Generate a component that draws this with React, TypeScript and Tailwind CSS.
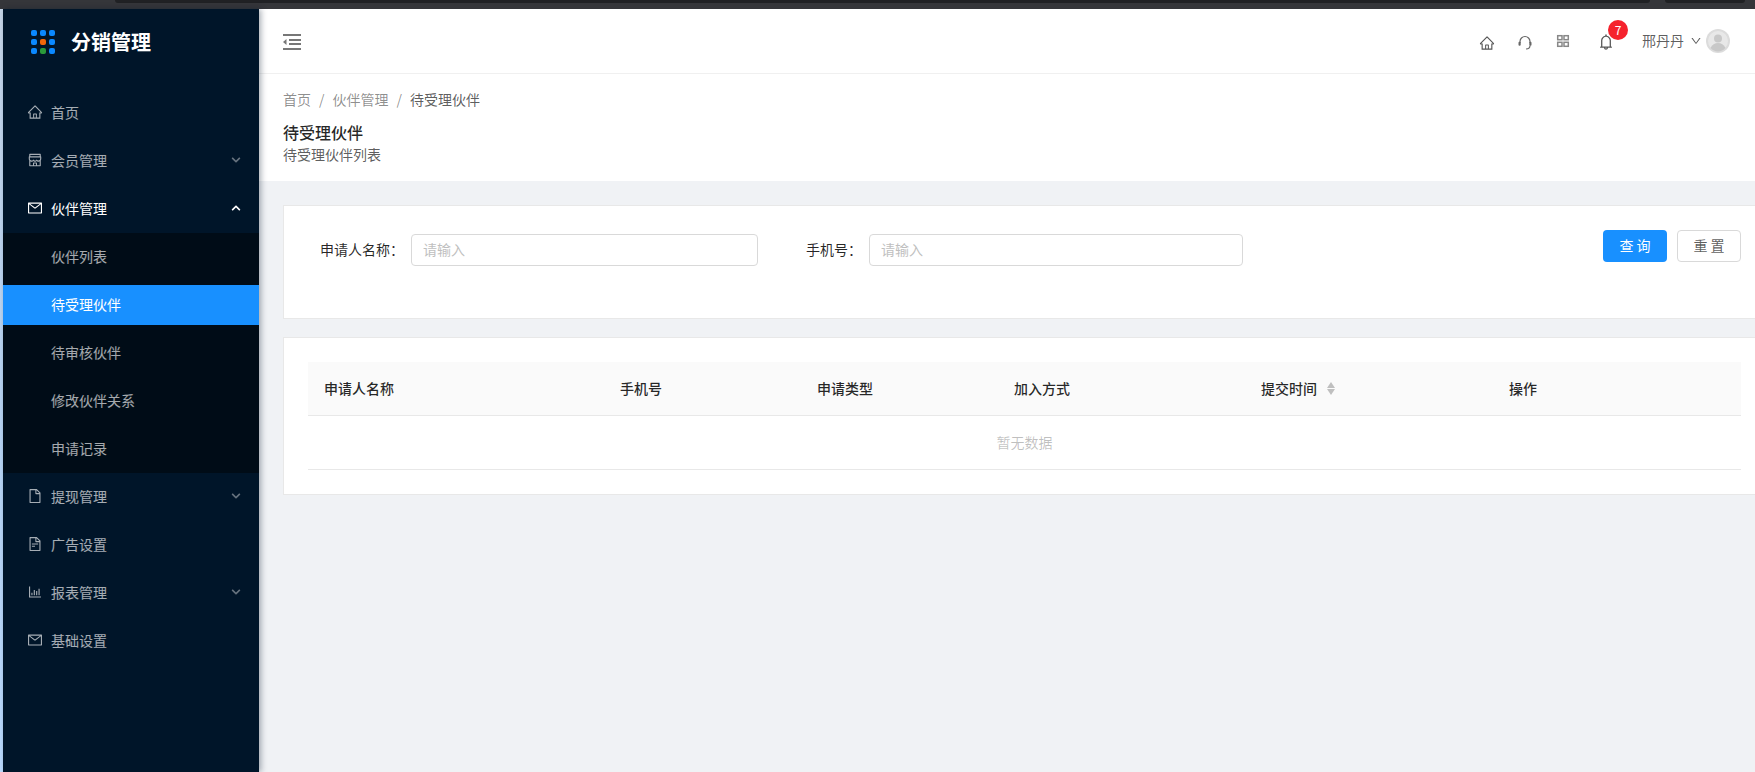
import type { ReactNode } from 'react';
import {
  AiOutlineHome,
  AiOutlineShop,
  AiOutlineMail,
  AiOutlineFile,
  AiOutlineFileText,
  AiOutlineBarChart,
  AiOutlineBell,
  AiOutlineDown,
} from 'react-icons/ai';
import { FaChevronDown, FaChevronUp } from 'react-icons/fa';

const dots = [
  'bg-[#0a88ff]', 'bg-[#0a88ff]', 'bg-[#0a88ff]',
  'bg-[#0a88ff]', 'bg-[#f0660a]', 'bg-[#0a88ff]',
  'bg-[#0a88ff]', 'bg-[#2b9a3a]', 'bg-[#0a88ff]',
];

function MenuItem({ icon, label, arrow, active }: { icon: ReactNode; label: string; arrow?: 'up' | 'down'; active?: boolean }) {
  return (
    <div className={`flex h-10 items-center pb-[2px] pl-6 pr-[18px] ${active ? 'text-white' : 'text-white/65'}`}>
      <span className="mr-2 flex w-4 justify-center text-[16px]">{icon}</span>
      <span className="flex-1">{label}</span>
      {arrow === 'down' && <FaChevronDown className="text-[10px] text-white/40" />}
      {arrow === 'up' && <FaChevronUp className="text-[10px] text-white" />}
    </div>
  );
}

function SubItem({ label, active }: { label: string; active?: boolean }) {
  return (
    <div className={`flex h-10 items-center pb-[2px] pl-12 ${active ? 'bg-[#1890ff] text-white' : 'text-white/65'}`}>{label}</div>
  );
}

function Sidebar() {
  return (
    <aside className="relative z-10 flex w-[256px] shrink-0 flex-col bg-[#001529] shadow-[2px_0_6px_rgba(0,21,41,0.35)]">
      <div className="flex h-[66px] items-center pl-7">
        <div className="grid w-6 grid-cols-3 gap-[3px]">
          {dots.map((c, i) => (
            <div key={i} className={`h-[6px] w-[6px] rounded-[2px] ${c}`} />
          ))}
        </div>
        <span className="ml-[16px] text-xl font-bold text-white">分销管理</span>
      </div>
      <div className="mt-[18px] flex flex-col gap-2">
        <MenuItem icon={<AiOutlineHome />} label="首页" />
        <MenuItem icon={<AiOutlineShop />} label="会员管理" arrow="down" />
        <MenuItem icon={<AiOutlineMail />} label="伙伴管理" arrow="up" active />
      </div>
      <div className="mt-1 flex flex-col gap-2 bg-[#000c17] py-1">
        <SubItem label="伙伴列表" />
        <SubItem label="待受理伙伴" active />
        <SubItem label="待审核伙伴" />
        <SubItem label="修改伙伴关系" />
        <SubItem label="申请记录" />
      </div>
      <div className="mt-1 flex flex-col gap-2">
        <MenuItem icon={<AiOutlineFile />} label="提现管理" arrow="down" />
        <MenuItem icon={<AiOutlineFileText />} label="广告设置" />
        <MenuItem icon={<AiOutlineBarChart />} label="报表管理" arrow="down" />
        <MenuItem icon={<AiOutlineMail />} label="基础设置" />
      </div>
    </aside>
  );
}

function Header() {
  return (
    <header className="flex h-[65px] shrink-0 items-center border-b border-[#f0f0f0] bg-white pl-6 pr-[25px] text-black/65">
      <svg className="mt-[2px] h-4 w-[18px]" viewBox="0 0 18 16" fill="#777">
        <rect x="0" y="0" width="18" height="2" />
        <rect x="0" y="14" width="18" height="2" />
        <rect x="6" y="5" width="12" height="2" />
        <rect x="6" y="9" width="12" height="2" />
        <path d="M3.500 5v6L0 8z" />
      </svg>
      <div className="ml-auto flex items-center text-base">
        <AiOutlineHome className="mt-[4px] text-[16px] text-[#555]" />
        <svg className="ml-[22px] mt-[4px] h-4 w-4" viewBox="0 0 16 16" fill="none" stroke="#666" strokeWidth="1.2">
          <path d="M3 8V6.500a5 5 0 0 1 10 0V8" />
          <rect x="1.500" y="6.800" width="2.200" height="4" rx="1" fill="#666" stroke="none" />
          <rect x="12.300" y="6.800" width="2.200" height="4" rx="1" fill="#666" stroke="none" />
          <path d="M13 10.500c0 2-1.500 3.500-4 3.500" />
        </svg>
        <svg className="ml-[22px] h-4 w-4" viewBox="0 0 16 16" fill="none" stroke="#888" strokeWidth="1.500">
          <rect x="2.700" y="2.700" width="4.300" height="4" />
          <rect x="9" y="2.700" width="4.300" height="4" />
          <rect x="2.700" y="9.300" width="4.300" height="4" />
          <rect x="9" y="9.300" width="4.300" height="4" />
        </svg>
        <div className="relative ml-[26px] mt-[2px]">
          <AiOutlineBell className="text-[18px] text-[#555]" />
          <span className="absolute -right-[13px] -top-[13px] flex h-5 w-5 items-center justify-center rounded-full bg-[#f5222d] text-xs text-white">7</span>
        </div>
        <span className="ml-[27px] pb-[2px] text-sm">邢丹丹</span>
        <AiOutlineDown className="ml-[6px] text-[12px]" />
        <svg className="ml-[4px] h-6 w-6" viewBox="0 0 24 24">
          <circle cx="12" cy="12" r="12" fill="#dcdcdc" />
          <circle cx="12" cy="12" r="10" fill="#e8e8e8" />
          <circle cx="12" cy="9.500" r="4" fill="#c8c8c8" />
          <path d="M4.500 19c1.500-3.500 4.500-5 7.500-5s6 1.500 7.500 5a10 10 0 0 1-15 0z" fill="#c8c8c8" />
        </svg>
      </div>
    </header>
  );
}

function PageHeader() {
  return (
    <div className="h-[107px] shrink-0 bg-white pl-6 pt-[14px] text-sm">
      <div className="flex h-[22px] items-center text-black/45">
        <span>首页</span>
        <span className="mx-2">/</span>
        <span>伙伴管理</span>
        <span className="mx-2">/</span>
        <span className="text-black/65">待受理伙伴</span>
      </div>
      <div className="mt-[10px] h-6 text-base leading-6 font-medium text-black/85">待受理伙伴</div>
      <div className="h-[22px] leading-[20px] text-black/65">待受理伙伴列表</div>
    </div>
  );
}

function Field({ label, labelWidth, inputWidth }: { label: string; labelWidth: string; inputWidth: string }) {
  return (
    <div className="flex items-center">
      <label className={`pb-[2px] text-black/85 ${labelWidth}`}>{label}</label>
      <input
        placeholder="请输入"
        className={`h-8 rounded border border-[#d9d9d9] bg-white px-[11px] pb-[2px] text-sm outline-none placeholder:text-[#bfbfbf] ${inputWidth}`}
      />
    </div>
  );
}

function SearchCard() {
  return (
    <div className="flex h-[114px] items-start border-y border-l border-[#e8e8e8] bg-white pl-[37px] pr-[14px] pt-[28px] text-sm">
      <Field label="申请人名称：" labelWidth="w-[90px] -ml-px" inputWidth="w-[347px] ml-px" />
      <div className="ml-12">
        <Field label="手机号：" labelWidth="w-[63px]" inputWidth="w-[374px]" />
      </div>
      <div className="-mt-1 ml-auto flex gap-[10px]">
        <button className="h-8 w-16 rounded bg-[#1890ff] pb-[2px] text-white">查 询</button>
        <button className="h-8 w-16 rounded border border-[#d9d9d9] bg-white pb-[2px] text-black/65">重 置</button>
      </div>
    </div>
  );
}

const columns = [
  { title: '申请人名称', w: 'w-[296px]' },
  { title: '手机号', w: 'w-[197px]' },
  { title: '申请类型', w: 'w-[197px]' },
  { title: '加入方式', w: 'w-[247px]' },
  { title: '提交时间', w: 'w-[248px]', sort: true },
  { title: '操作', w: 'w-[248px]' },
];

function TableCard() {
  return (
    <div className="mt-[18px] h-[158px] border-y border-l border-[#e8e8e8] bg-white pl-6 pr-[14px] pt-6 text-sm">
      <table className="w-full table-fixed border-collapse">
        <thead>
          <tr className="h-[53px] border-b border-[#e8e8e8] bg-[#fafafa]">
            {columns.map((col) => (
              <th key={col.title} className={`px-4 text-left font-medium text-black/85 ${col.w}`}>
                <span className="flex items-center">
                  {col.title}
                  {col.sort && (
                    <span className="ml-[10px] flex flex-col gap-[1px]">
                      <span className="h-0 w-0 border-x-4 border-b-[6px] border-x-transparent border-b-[#bfbfbf]" />
                      <span className="h-0 w-0 border-x-4 border-t-[6px] border-x-transparent border-t-[#bfbfbf]" />
                    </span>
                  )}
                </span>
              </th>
            ))}
          </tr>
        </thead>
        <tbody>
          <tr className="h-[54px] border-b border-[#e8e8e8]">
            <td colSpan={6} className="text-center text-black/25">暂无数据</td>
          </tr>
        </tbody>
      </table>
    </div>
  );
}

export default function App() {
  return (
    <div className="flex h-screen w-full flex-col overflow-hidden bg-[#f0f2f5] font-['Noto_Sans_CJK_SC','Microsoft_YaHei',sans-serif] text-sm">
      <div className="flex h-[9px] shrink-0 items-start bg-[#35363a]">
        <div className="ml-[115px] h-[3px] w-[1535px] rounded-b-md bg-[#202124]" />
        <div className="ml-[15px] h-[3px] w-[80px] rounded-b-md bg-[#202124]" />
      </div>
      <div className="flex min-h-0 flex-1">
        <div className="w-[3px] shrink-0 bg-gradient-to-b from-[#c8d8ea] via-[#b9d6f4] to-[#bcdcff]" />
        <Sidebar />
        <main className="flex min-w-0 flex-1 flex-col">
          <Header />
          <PageHeader />
          <div className="pl-6 pt-6">
            <SearchCard />
            <TableCard />
          </div>
        </main>
      </div>
    </div>
  );
}
